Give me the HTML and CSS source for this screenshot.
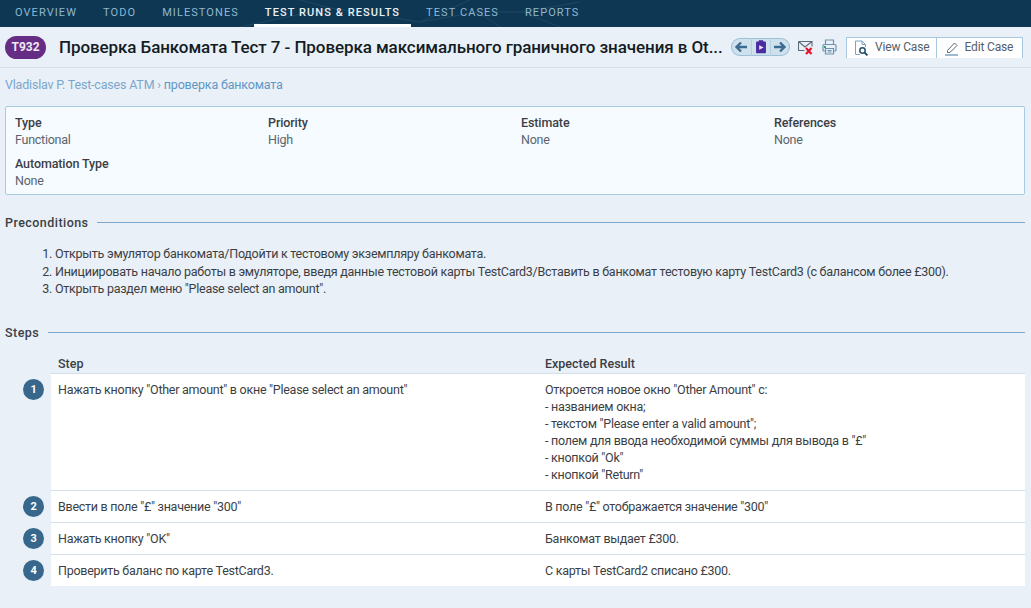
FILE: index.html
```html
<!DOCTYPE html><html lang='en'>
<head>
	<meta charset='utf-8'>
	<title>T932</title>
	<link rel="stylesheet" href="styles.css">
</head>
<body>
	<nav class='tabs'>
		<!-- faint network pattern behind the tabs -->
		<svg class='tabs-bg' width='1031' height='27' viewBox='0 0 1031 27'><path d='M240 27L330 8L420 22L478 12L522 12L580 2M420 22L470 0M478 12L500 27M522 12L560 27M330 8L300 0' fill='none' stroke='#1d4864' stroke-width='1'/></svg>
		<a class='tab'>OVERVIEW</a>
		<a class='tab'>TODO</a>
		<a class='tab'>MILESTONES</a>
		<a class='tab active'>TEST RUNS &amp; RESULTS</a>
		<a class='tab'>TEST CASES</a>
		<a class='tab'>REPORTS</a>
	</nav>
	<header class='head'>
		<span class='badge'>T932</span>
		<h1 class='title'>Проверка Банкомата Тест 7 - Проверка максимального граничного значения в Ot...</h1>
		<div class='pager'>
			<svg width='20' height='18' viewBox='0 0 20 18'><path d='M16 9H6M10 4.500L5.500 9L10 13.500' fill='none' stroke='#3d6b8f' stroke-width='2.400'/></svg>
			<svg class='pager-mid' width='20' height='18' viewBox='0 0 20 18'><rect x='4.500' y='3' width='11' height='13' rx='1' fill='#4a2ca0'/><rect x='7.500' y='1.500' width='5' height='3' fill='#4a2ca0'/><path d='M8 7L13 9.500L8 12z' fill='#e8e4f6'/></svg>
			<svg width='19' height='18' viewBox='0 0 19 18'><path d='M3 9H13M9 4.500L13.500 9L9 13.500' fill='none' stroke='#3d6b8f' stroke-width='2.400'/></svg>
		</div>
		<svg class='ico-mail' width='15' height='15' viewBox='0 0 15 15'><path d='M.5 1.500H14V6.500M.5 1.500V10.500H6.500M.5 1.500L7 7L14 1.500' fill='none' stroke='#5a6b78' stroke-width='1.100'/><path d='M8 8L13.500 14M13.500 8L8 14' stroke='#e0142c' stroke-width='2.200'/></svg>
		<svg class='ico-print' width='15' height='16' viewBox='0 0 15 16'><path d='M3.500 5V1H11.500V5M3.500 12H2Q1 12 1 11V6.500Q1 5.500 2 5.500H13Q14 5.500 14 6.500V11Q14 12 13 12H11.500M3.500 9.500H11.500V15H3.500zM5.500 11.500H9.500M5.500 13H9.500' fill='none' stroke='#6c93b0' stroke-width='1.200'/><rect x='2' y='7' width='2' height='2' fill='#2f9e6e'/></svg>
		<div class='btns'>
			<a class='btn'><svg width='14' height='16' viewBox='0 0 14 16'><path d='M5 14.500H.5V1H7L10.500 4.500V7M7 1V4.500H10.500' fill='none' stroke='#7ba3c2' stroke-width='1'/><circle cx='7.500' cy='10.500' r='2.700' fill='none' stroke='#24506f' stroke-width='1.500'/><path d='M9.500 12.500L12.500 15.500' stroke='#24506f' stroke-width='1.800'/></svg>View Case</a>
			<a class='btn'><svg width='13' height='16' viewBox='0 0 13 16'><path d='M2.500 10.500L9.500 3L12 5.500L5 12.500H2.500z' fill='none' stroke='#5a6b78' stroke-width='1'/><path d='M0 15H13' stroke='#7ba3c2' stroke-width='1.500'/></svg>Edit Case</a>
		</div>
	</header>
	<main class='content'>
		<div class='crumbs'><a>Vladislav P. Test-cases ATM</a> <span class='sep'>›</span> <a class='crumb-dark'>проверка банкомата</a></div>
		<section class='info'>
			<div class='field'><b>Type</b><span>Functional</span></div>
			<div class='field'><b>Priority</b><span>High</span></div>
			<div class='field'><b>Estimate</b><span>None</span></div>
			<div class='field'><b>References</b><span>None</span></div>
			<div class='field'><b>Automation Type</b><span>None</span></div>
		</section>
		<h2 class='sect'><span>Preconditions</span></h2>
		<ol class='pre'>
			<li>Открыть эмулятор банкомата/Подойти к тестовому экземпляру банкомата.</li>
			<li>Инициировать начало работы в эмуляторе, введя данные тестовой карты TestCard3/Вставить в банкомат тестовую карту TestCard3 (с балансом более £300).</li>
			<li>Открыть раздел меню "Please select an amount".</li>
		</ol>
		<h2 class='sect sect-steps'><span>Steps</span></h2>
		<div class='steps'>
			<div class='row-head'><div>Step</div><div>Expected Result</div></div>
			<div class='row'>
				<span class='num'>1</span>
				<div class='cells'>
					<div>Нажать кнопку "Other amount" в окне "Please select an amount"</div>
					<div>Откроется новое окно "Other Amount" с:<br>- названием окна;<br>- текстом "Please enter a valid amount";<br>- полем для ввода необходимой суммы для вывода в "£"<br>- кнопкой "Ok"<br>- кнопкой "Return"</div>
				</div>
			</div>
			<div class='row'>
				<span class='num'>2</span>
				<div class='cells'><div>Ввести в поле "£" значение "300"</div><div>В поле "£" отображается значение "300"</div></div>
			</div>
			<div class='row'>
				<span class='num'>3</span>
				<div class='cells'><div>Нажать кнопку "OK"</div><div>Банкомат выдает £300.</div></div>
			</div>
			<div class='row'>
				<span class='num'>4</span>
				<div class='cells'><div>Проверить баланс по карте TestCard3.</div><div>С карты TestCard2 списано £300.</div></div>
			</div>
		</div>
	</main>
</body>
</html>
```
FILE: styles.css
```css
*{
	box-sizing:border-box;
}
html,body{
	margin:0;
	height:100%;
}
body{
	background:#e9f0f7;
	color:#3b3f45;
	font-family:Roboto,"Noto Sans",sans-serif;
	font-size:12.500px;
	letter-spacing:-.26px;
	line-height:17px;
	overflow:hidden;
}
.tabs{
	position:relative;
	display:flex;
	height:27px;
	background:#0e3753;
	padding-left:4px;
}
.tabs-bg{
	position:absolute;
	top:0;
	left:0;
}
.tab{
	position:relative;
	padding:4px 11px 0;
	margin-right:4px;
	height:27px;
	color:#8fb7d2;
	font-size:11px;
	letter-spacing:1.080px;
	line-height:17px;
}
.tab.active{
	color:#e8f0f6;
	font-weight:500;
	border-bottom:3px solid #fff;
}
.head{
	display:flex;
	align-items:center;
	height:41px;
	padding:0 6px 0 5px;
	border-bottom:1px solid #d3e0ec;
}
.badge{
	flex:none;
	width:41px;
	height:23px;
	border-radius:12px;
	background:#662d84;
	color:#f2e8f6;
	font-size:12px;
	font-weight:700;
	letter-spacing:0;
	line-height:23px;
	text-align:center;
}
.title{
	flex:none;
	width:663px;
	margin:0 0 0 13px;
	color:#141c24;
	font-size:17px;
	font-weight:500;
	letter-spacing:-.09px;
	line-height:24px;
	white-space:nowrap;
}
.pager{
	display:flex;
	align-items:center;
	flex:none;
	width:59px;
	height:18px;
	margin-left:9px;
	border-radius:9px;
	background:#d0e1ee;
	box-shadow:inset 0 0 0 1px #9cc0da;
}
.pager-mid{
	border-left:1px solid #b4cfe2;
	border-right:1px solid #b4cfe2;
}
.ico-mail{
	flex:none;
	margin-left:8px;
}
.ico-print{
	flex:none;
	margin-left:9px;
}
.btns{
	display:flex;
	flex:none;
	height:21px;
	margin-left:9px;
	border:1px solid #a9c8de;
	border-bottom:0;
	background:#fff;
	white-space:nowrap;
}
.btn{
	display:flex;
	align-items:center;
	gap:6px;
	padding:0 7px 0 8px;
	color:#54606c;
	font-size:12px;
	letter-spacing:-.15px;
}
.btn+.btn{
	padding-right:9px;
	border-left:1px solid #a9c8de;
}
.content{
	padding:0 6px 0 5px;
}
.crumbs{
	margin-top:8px;
	color:#7ba7cd;
	letter-spacing:-.19px;
}
.crumb-dark{
	color:#5f97c6;
}
.info{
	display:grid;
	grid-template-columns:repeat(4,253px);
	row-gap:7px;
	height:89px;
	margin-top:13px;
	padding:7px 9px;
	border:1px solid #a9cbe2;
	border-radius:2px;
	background:#f6fbff;
}
.field b{
	display:block;
	color:#3b3f45;
	font-weight:500;
	letter-spacing:-.1px;
}
.field span{
	display:block;
	color:#5a646e;
}
.sect{
	display:flex;
	align-items:center;
	gap:9px;
	margin:19px 0 0;
	color:#3b3f45;
	font-size:12.500px;
	font-weight:500;
	letter-spacing:.45px;
	line-height:17px;
}
.sect::after{
	content:'';
	flex:1;
	height:1px;
	background:#7ba7cd;
}
.sect-steps{
	margin-top:26.500px;
}
.pre{
	margin:14px 0 0;
	padding-left:50px;
	color:#3b3f45;
}
.pre li{
	height:17.500px;
}
.steps{
	margin-top:14px;
}
.row-head{
	display:grid;
	grid-template-columns:487px 1fr;
	margin-left:46px;
	height:18px;
	padding-left:7px;
	font-weight:500;
	letter-spacing:0;
}
.row{
	display:flex;
}
.num{
	flex:none;
	width:21px;
	height:21px;
	margin:6px 0 0 18px;
	border-radius:50%;
	background:#37678b;
	color:#fff;
	font-size:11px;
	font-weight:700;
	line-height:21px;
	text-align:center;
}
.cells{
	display:grid;
	grid-template-columns:487px 1fr;
	flex:1;
	margin-left:7px;
	padding:7px;
	background:#fff;
	border-top:1px solid #d3e0ec;
}
```
